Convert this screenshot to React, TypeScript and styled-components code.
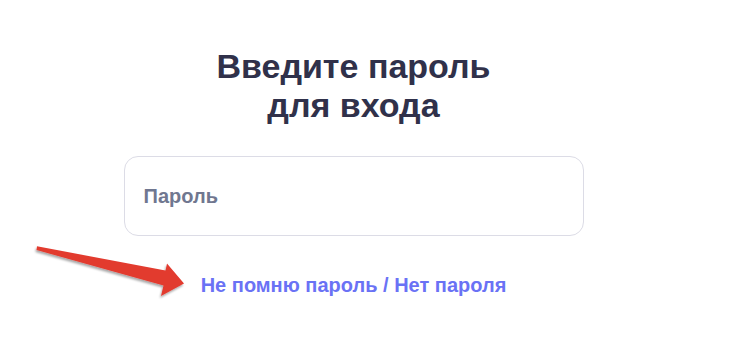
import React from "react";
import styled, { createGlobalStyle } from "styled-components";

const Global = createGlobalStyle`
  html, body { margin: 0; padding: 0; background: #ffffff; }
  body { font-family: "Liberation Sans", Arial, sans-serif; }
`;

const Page = styled.div`
  position: relative;
  width: 707px;
  height: 364px;
  display: flex;
  flex-direction: column;
  align-items: center;
  padding-top: 46.5px;
  box-sizing: border-box;
`;

const Title = styled.h1`
  margin: 0;
  font-size: 34px;
  line-height: 39px;
  font-weight: 700;
  color: #30314a;
  text-align: center;
`;

const Field = styled.label`
  margin-top: 31.5px;
  width: 460px;
  height: 80px;
  box-sizing: border-box;
  border: 1px solid #dcdce6;
  border-radius: 14px;
  display: flex;
  align-items: center;
  padding: 0 19px;
`;

const Input = styled.input`
  border: none;
  outline: none;
  width: 100%;
  padding: 0;
  font-family: "Liberation Sans", Arial, sans-serif;
  font-size: 20px;
  line-height: 23px;
  font-weight: 700;
  color: #30314a;
  background: transparent;
  &::placeholder { color: #707790; }
`;

const Link = styled.a`
  margin-top: 37.5px;
  font-size: 20px;
  line-height: 23px;
  font-weight: 700;
  color: #6a72f5;
  text-decoration: none;
  cursor: pointer;
`;

const Arrow = styled.svg`
  position: absolute;
  left: 0;
  top: 0;
  pointer-events: none;
`;

export default function App() {
  return (
    <>
      <Global />
      <Page>
        <Title>
          Введите пароль
          <br />
          для входа
        </Title>
        <Field>
          <Input type="password" placeholder="Пароль" />
        </Field>
        <Link>Не помню пароль / Нет пароля</Link>
        <Arrow width="200" height="310" viewBox="0 0 200 310">
          <defs>
            <filter id="sh" x="-10%" y="-10%" width="130%" height="140%">
              <feDropShadow dx="-1" dy="2" stdDeviation="1" floodColor="#000" floodOpacity="0.35" />
            </filter>
          </defs>
          <polygon
            filter="url(#sh)"
            fill="#e23a2f"
            points="37,246.3 165.5,270.5 167,263.5 184,283.5 161,296 163.5,285.5 36.5,250"
            strokeLinejoin="round"
          />
        </Arrow>
      </Page>
    </>
  );
}
